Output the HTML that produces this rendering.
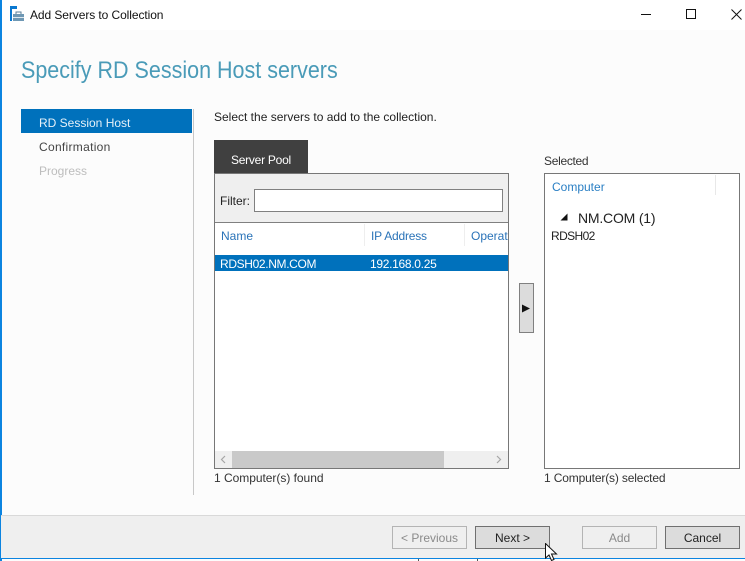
<!DOCTYPE html>
<html><head><meta charset="utf-8"><style>
html,body{margin:0;padding:0}
body{width:745px;height:561px;position:relative;overflow:hidden;background:#fcfcfc;font-family:"Liberation Sans",sans-serif;font-size:12px;color:#222}
div,span{position:absolute;box-sizing:border-box}
.t{white-space:nowrap;line-height:16px;height:16px}
.btn{height:23px;top:526px;width:75px;border:1px solid #707070;background:#dcdcdc;text-align:center;line-height:22px;color:#222}
.dis{border-color:#b4b4b4;background:#efefef;color:#8a8a8a}
</style></head><body>
<div style="left:0;top:0;width:745px;height:30px;background:#fff"></div>
<svg style="position:absolute;left:10px;top:6px" width="15" height="16" viewBox="0 0 15 16"><rect x="0" y="0" width="7" height="3" fill="#0a78d0"/><rect x="0" y="3" width="2" height="12" fill="#0a78d0"/><path d="M3 8h11v7H3z" fill="#6f98b4"/><path d="M6 8V6h5v2" fill="none" stroke="#5c7f98"/><rect x="3" y="11" width="11" height="1" fill="#dfe8ee"/></svg>
<div class="t" style="left:30px;top:7px;color:#111;letter-spacing:-.08px">Add Servers to Collection</div>
<div style="left:641px;top:14px;width:10px;height:1px;background:#111"></div>
<div style="left:686px;top:9px;width:10px;height:10px;border:1px solid #111"></div>
<svg style="position:absolute;left:731px;top:9px" width="11" height="11" viewBox="0 0 11 11"><path d="M.5 .5L10.500 10.500M10.500 .5L.5 10.500" stroke="#111" fill="none"/></svg>
<div style="left:0;top:0;width:1.5px;height:561px;background:#0c84e0"></div>
<div class="t" style="left:21px;top:57px;height:28px;line-height:28px;font-size:24px;color:#4a9bb8;transform-origin:left center;transform:scaleX(.896)">Specify RD Session Host servers</div>
<div style="left:21px;top:109px;width:171px;height:24px;background:#0071bc"></div>
<div class="t" style="left:39px;top:115px;color:#e6f1f8">RD Session Host</div>
<div class="t" style="left:39px;top:139px;color:#444;letter-spacing:.3px">Confirmation</div>
<div class="t" style="left:39px;top:163px;color:#bdbdbd">Progress</div>
<div style="left:193px;top:109px;width:1px;height:386px;background:#c8c8c8"></div>
<div class="t" style="left:214px;top:109px;color:#222">Select the servers to add to the collection.</div>
<div style="left:214px;top:140px;width:94px;height:33px;background:#404040"></div>
<div class="t" style="left:231px;top:152px;color:#fff;letter-spacing:-.25px">Server Pool</div>
<div class="t" style="left:544px;top:153px;color:#333;letter-spacing:-.3px">Selected</div>
<div style="left:214px;top:173px;width:295px;height:296px;border:1px solid #777;background:#fff"></div>
<div style="left:215px;top:174px;width:293px;height:48px;background:#efefef"></div>
<div style="left:215px;top:222px;width:293px;height:1px;background:#808080"></div>
<div class="t" style="left:220px;top:193px;color:#222">Filter:</div>
<div style="left:254px;top:189px;width:249px;height:23px;background:#fff;border:1px solid #808080"></div>
<div style="left:364px;top:224px;width:1px;height:22px;background:#eee"></div>
<div style="left:464px;top:224px;width:1px;height:22px;background:#eee"></div>
<div class="t" style="left:221px;top:228px;color:#2a73b8">Name</div>
<div class="t" style="left:371px;top:228px;color:#2a73b8;letter-spacing:-.2px">IP Address</div>
<div style="left:471px;top:228px;width:37px;height:16px;overflow:hidden;line-height:16px;color:#2a73b8;white-space:nowrap">Operating</div>
<div style="left:215px;top:255px;width:293px;height:16px;background:#0071bc"></div>
<div class="t" style="left:220px;top:256px;color:#fff;letter-spacing:-.35px">RDSH02.NM.COM</div>
<div class="t" style="left:370px;top:256px;color:#fff;letter-spacing:-.3px">192.168.0.25</div>
<div style="left:215px;top:451px;width:293px;height:17px;background:#efefef"></div>
<div style="left:232px;top:451px;width:212px;height:17px;background:#c9c9c9"></div>
<svg style="position:absolute;left:215px;top:451px" width="293" height="17" viewBox="0 0 293 17"><path d="M10 5L6.500 8.500L10 12" fill="none" stroke="#a6a6a6" stroke-width="1.200"/><path d="M282 5L285.500 8.500L282 12" fill="none" stroke="#a6a6a6" stroke-width="1.200"/></svg>
<div class="t" style="left:214px;top:470px;color:#333;letter-spacing:-.03px">1 Computer(s) found</div>
<div style="left:519px;top:283px;width:15px;height:50px;background:#dcdcdc;border:1px solid #808080"></div>
<svg style="position:absolute;left:519px;top:283px" width="15" height="50" viewBox="0 0 15 50"><path d="M3 21.500L11 25.500L3 29.500z" fill="#111"/></svg>
<div style="left:544px;top:173px;width:196px;height:296px;border:1px solid #777;background:#fff"></div>
<div style="left:715px;top:175px;width:1px;height:20px;background:#e8e8e8"></div>
<div class="t" style="left:552px;top:179px;color:#2a7fc4">Computer</div>
<svg style="position:absolute;left:560px;top:213px" width="8" height="8" viewBox="0 0 8 8"><path d="M.5 7.500L7.500 .5V7.500z" fill="#111"/></svg>
<div class="t" style="left:578px;top:210px;font-size:14px;color:#222;letter-spacing:-.2px">NM.COM (1)</div>
<div class="t" style="left:551px;top:228px;color:#222;letter-spacing:-.6px">RDSH02</div>
<div class="t" style="left:544px;top:470px;color:#333;letter-spacing:-.15px">1 Computer(s) selected</div>
<div style="left:1px;top:515px;width:744px;height:43px;background:#efefef;border-top:1px solid #d9d9d9"></div>
<div class="btn dis" style="left:392px">&lt; Previous</div>
<div class="btn" style="left:475px">Next &gt;</div>
<div class="btn dis" style="left:582px">Add</div>
<div class="btn" style="left:665px">Cancel</div>
<div style="left:0;top:558px;width:745px;height:1px;background:#0c84e0"></div>
<div style="left:418px;top:559px;width:1px;height:2px;background:#555"></div>
<div style="left:477px;top:559px;width:1px;height:2px;background:#555"></div>
<svg style="position:absolute;left:545px;top:543px" width="14" height="18" viewBox="0 0 14 18"><path d="M.5 .5V15L4 12L6.500 17.500L9 16.500L6.500 11H11.500z" fill="#fff" stroke="#111" stroke-width="1"/></svg>
</body></html>
